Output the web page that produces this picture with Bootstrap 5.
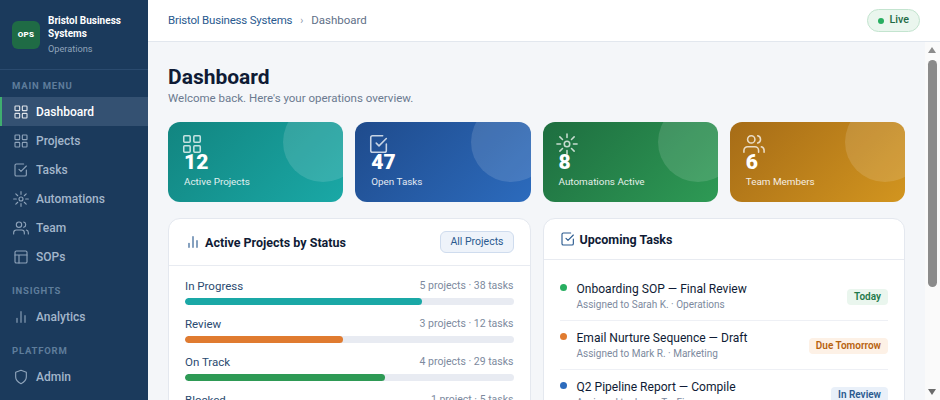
<!DOCTYPE html>
<html lang="en">
<head>
  <meta charset="UTF-8" />
  <meta name="viewport" content="width=device-width, initial-scale=1" />
  <title>Dashboard - Bristol Business Systems</title>
  <link href="https://cdn.jsdelivr.net/npm/bootstrap@5.3.3/dist/css/bootstrap.min.css" rel="stylesheet" />
  <style>
    html, body { height: 100%; overflow: hidden; }
    body { background-color: #f4f6f9; font-family: Roboto, "Noto Sans", sans-serif; font-size: 12px; color: #0f1b35; }
    svg.ico { fill: none; stroke: currentColor; stroke-width: 1.7; stroke-linecap: round; stroke-linejoin: round; flex-shrink: 0; }
    .shell { height: 400px; }
    .side-panel { width: 148px; background-color: #1b3a5c; color: #fff; flex-shrink: 0; height: 400px; overflow: hidden; }
    .brand-box { height: 70px; padding: 0 12px; border-bottom: 1px solid #2a4a6e; gap: 8px; flex-shrink: 0; }
    .brand-logo { width: 28px; height: 28px; border-radius: 6px; background-color: #1f6b45; font-size: 8px; font-weight: 900; letter-spacing: .3px; flex-shrink: 0; }
    .brand-name { font-size: 10px; font-weight: 700; line-height: 13px; }
    .brand-sub { font-size: 9.2px; line-height: 13px; margin-top: 2px; color: #8fa3ba; }
    .menu-label { font-size: 9.5px; font-weight: 700; letter-spacing: .8px; color: #5f7d9b; text-transform: uppercase; padding: 0 12px; line-height: 13px; margin: 13px 0 5px; flex-shrink: 0; }
    .menu-label.first-label { margin-top: 9px; }
    .menu-link { height: 29px; padding-left: 11px; gap: 7px; font-size: 12px; font-weight: 500; color: #a3b6cb; text-decoration: none; border-left: 2px solid transparent; flex-shrink: 0; }
    .menu-link svg { opacity: .85; }
    .menu-link.active { background-color: #345172; color: #fff; border-left-color: #3fae6f; }
    .top-strip { height: 42px; background-color: #fff; border-bottom: 1px solid #e2e7ee; padding: 0 20px; flex-shrink: 0; }
    .crumb-trail { font-size: 11.5px; color: #2a5a8f; letter-spacing: -.2px; }
    .crumb-sep { color: #8a97a8; margin: 0 8px; font-size: 10px; }
    .crumb-now { color: #5f7088; letter-spacing: 0; }
    .live-pill { height: 23px; padding: 0 10px; border-radius: 12px; background-color: #eaf6ee; border: 1px solid #c3e4cf; color: #1f6b45; font-size: 10.75px; font-weight: 500; gap: 5px; }
    .live-dot { width: 6px; height: 6px; border-radius: 50%; background-color: #27ae60; }
    .body-row { height: 358px; }
    .main-scroll { height: 358px; overflow: hidden; padding: 22px 20px 0; min-width: 0; }
    .scroll-rail { width: 15px; flex-shrink: 0; background-color: #fafafa; padding: 5px 3px; }
    .rail-up { width: 0; height: 0; border-left: 4.5px solid transparent; border-right: 4.5px solid transparent; border-bottom: 6px solid #8b8b8b; }
    .rail-down { width: 0; height: 0; border-left: 4.5px solid transparent; border-right: 4.5px solid transparent; border-top: 6px solid #6b6b6b; margin-top: auto; }
    .rail-thumb { width: 9px; height: 227px; border-radius: 5px; background-color: #8b8b8b; margin-top: 7px; }
    .page-title { font-size: 21px; font-weight: 700; line-height: 26px; margin: 0; color: #0f1b35; }
    .page-sub { font-size: 11.5px; color: #6b7a90; line-height: 16px; margin-bottom: 16px; }
    .stat-grid { display: grid; grid-template-columns: repeat(4, 1fr); gap: 12px; margin-bottom: 16px; }
    .stat-tile { position: relative; height: 80px; border-radius: 12px; overflow: hidden; color: #fff; padding: 11px 16px 0; }
    .stat-circle { position: absolute; width: 80px; height: 80px; border-radius: 50%; background-color: rgba(255,255,255,.13); top: -20px; right: -20px; }
    .stat-icon { display: block; margin-left: -3px; opacity: .75; }
    .stat-num { font-size: 21px; font-weight: 900; line-height: 20px; margin-top: -3px; }
    .stat-cap { font-size: 9.9px; line-height: 14px; margin-top: 3px; opacity: .88; }
    .tile-teal { background: linear-gradient(135deg, #128580, #1aa8a6); }
    .tile-blue { background: linear-gradient(135deg, #1f4b8c, #2c6bbd); }
    .tile-green { background: linear-gradient(135deg, #1e6e40, #2e9a55); }
    .tile-amber { background: linear-gradient(135deg, #a66c17, #d2951f); }
    .panel-grid { display: grid; grid-template-columns: 1fr 1fr; gap: 12px; }
    .panel-box { background-color: #fff; border: 1px solid #e4e8ef; border-radius: 12px; }
    .panel-head { border-bottom: 1px solid #e8ebf1; padding: 0 16px; gap: 4px; }
    .panel-title { font-size: 12.5px; font-weight: 700; color: #0f1b35; padding-top: 3px; }
    .head-tall { height: 47px; }
    .head-short { height: 41px; }
    .head-icon { color: #2a5a8f; }
    .ghost-btn { font-size: 10.5px; font-weight: 400; color: #2a5a8f; background-color: #eef3fa; border: 1px solid #cfdcee; border-radius: 6px; padding: 0 9px; height: 22px; line-height: 20px; }
    .bar-list { padding: 12px 16px 16px; }
    .bar-item { margin-bottom: 11px; }
    .bar-name { font-size: 11.5px; color: #2a4a70; font-weight: 400; line-height: 16px; }
    .bar-meta { font-size: 10.5px; color: #7d8a9e; line-height: 16px; }
    .bar-track { height: 7px; border-radius: 4px; background-color: #e8ebf2; margin-top: 4px; overflow: hidden; }
    .bar-fill { height: 7px; border-radius: 4px; }
    .task-list { padding: 12px 16px 7px; }
    .task-row { height: 49px; border-bottom: 1px solid #eef0f5; gap: 10px; padding: 9px 0 8px; }
    .task-dot { width: 7px; height: 7px; border-radius: 50%; margin-top: 3px; flex-shrink: 0; }
    .task-name { font-size: 12.05px; font-weight: 400; color: #0f1b35; line-height: 16px; }
    .task-sub { font-size: 10px; color: #7d8a9e; line-height: 15px; }
    .tag-chip { font-size: 10px; font-weight: 600; border-radius: 4px; padding: 0 7px; height: 16px; line-height: 16px; align-self: center; }
    .tag-green { background-color: #eaf6ee; color: #1f7a4a; }
    .tag-orange { background-color: #fdf1e6; color: #b8620e; }
    .tag-blue { background-color: #e9f0f9; color: #2a5a8f; }
  </style>
</head>
<body>
<div class="shell d-flex">
  <aside class="side-panel d-flex flex-column">
    <div class="brand-box d-flex align-items-center">
      <div class="brand-logo d-flex align-items-center justify-content-center">OPS</div>
      <div>
        <div class="brand-name">Bristol Business Systems</div>
        <div class="brand-sub">Operations</div>
      </div>
    </div>
    <div class="menu-label first-label">Main Menu</div>
    <a class="menu-link active d-flex align-items-center" href="#">
      <svg class="ico" width="16" height="16" viewBox="0 0 24 24"><rect x="3" y="3" width="7" height="7" rx="1"/><rect x="14" y="3" width="7" height="7" rx="1"/><rect x="3" y="14" width="7" height="7" rx="1"/><rect x="14" y="14" width="7" height="7" rx="1"/></svg>Dashboard</a>
    <a class="menu-link d-flex align-items-center" href="#">
      <svg class="ico" width="16" height="16" viewBox="0 0 24 24"><rect x="3" y="3" width="7" height="7" rx="1"/><rect x="14" y="3" width="7" height="7" rx="1"/><rect x="3" y="14" width="7" height="7" rx="1"/><rect x="14" y="14" width="7" height="7" rx="1"/></svg>Projects</a>
    <a class="menu-link d-flex align-items-center" href="#">
      <svg class="ico" width="16" height="16" viewBox="0 0 24 24"><path d="M9 11l3 3 8-8"/><path d="M20 12v7a2 2 0 0 1-2 2H5a2 2 0 0 1-2-2V5a2 2 0 0 1 2-2h11"/></svg>Tasks</a>
    <a class="menu-link d-flex align-items-center" href="#">
      <svg class="ico" width="16" height="16" viewBox="0 0 24 24"><circle cx="12" cy="12" r="3"/><path d="M12 1v4M12 19v4M4.2 4.2l2.9 2.9M16.9 16.9l2.9 2.9M1 12h4M19 12h4M4.2 19.8l2.9-2.9M16.9 7.1l2.9-2.9"/></svg>Automations</a>
    <a class="menu-link d-flex align-items-center" href="#">
      <svg class="ico" width="16" height="16" viewBox="0 0 24 24"><path d="M17 21v-2a4 4 0 0 0-4-4H5a4 4 0 0 0-4 4v2"/><circle cx="9" cy="7" r="4"/><path d="M23 21v-2a4 4 0 0 0-3-3.9"/><path d="M16 3.1a4 4 0 0 1 0 7.8"/></svg>Team</a>
    <a class="menu-link d-flex align-items-center" href="#">
      <svg class="ico" width="16" height="16" viewBox="0 0 24 24"><rect x="3" y="3" width="18" height="18" rx="2"/><path d="M3 9h18M9 21V9"/></svg>SOPs</a>
    <div class="menu-label">Insights</div>
    <a class="menu-link d-flex align-items-center" href="#">
      <svg class="ico" width="16" height="16" viewBox="0 0 24 24"><path d="M18 20V10M12 20V4M6 20v-6"/></svg>Analytics</a>
    <div class="menu-label">Platform</div>
    <a class="menu-link d-flex align-items-center" href="#">
      <svg class="ico" width="16" height="16" viewBox="0 0 24 24"><path d="M12 22s8-4 8-10V5l-8-3-8 3v7c0 6 8 10 8 10z"/></svg>Admin</a>
  </aside>

  <div class="flex-grow-1 d-flex flex-column" style="min-width:0">
    <header class="top-strip d-flex align-items-center justify-content-between">
      <div class="crumb-trail">Bristol Business Systems<span class="crumb-sep">›</span><span class="crumb-now">Dashboard</span></div>
      <div class="live-pill d-flex align-items-center"><span class="live-dot"></span>Live</div>
    </header>
    <div class="body-row d-flex">
      <main class="main-scroll flex-grow-1">
        <h1 class="page-title">Dashboard</h1>
        <div class="page-sub">Welcome back. Here's your operations overview.</div>

        <div class="stat-grid">
          <div class="stat-tile tile-teal">
            <span class="stat-circle"></span>
            <svg class="ico stat-icon" width="22" height="22" viewBox="0 0 24 24"><rect x="3" y="3" width="7" height="7" rx="1"/><rect x="14" y="3" width="7" height="7" rx="1"/><rect x="3" y="14" width="7" height="7" rx="1"/><rect x="14" y="14" width="7" height="7" rx="1"/></svg>
            <div class="stat-num">12</div>
            <div class="stat-cap">Active Projects</div>
          </div>
          <div class="stat-tile tile-blue">
            <span class="stat-circle"></span>
            <svg class="ico stat-icon" width="22" height="22" viewBox="0 0 24 24"><path d="M9 11l3 3 8-8"/><path d="M20 12v7a2 2 0 0 1-2 2H5a2 2 0 0 1-2-2V5a2 2 0 0 1 2-2h11"/></svg>
            <div class="stat-num">47</div>
            <div class="stat-cap">Open Tasks</div>
          </div>
          <div class="stat-tile tile-green">
            <span class="stat-circle"></span>
            <svg class="ico stat-icon" width="22" height="22" viewBox="0 0 24 24"><circle cx="12" cy="12" r="3"/><path d="M12 1v4M12 19v4M4.2 4.2l2.9 2.9M16.9 16.9l2.9 2.9M1 12h4M19 12h4M4.2 19.8l2.9-2.9M16.9 7.1l2.9-2.9"/></svg>
            <div class="stat-num">8</div>
            <div class="stat-cap">Automations Active</div>
          </div>
          <div class="stat-tile tile-amber">
            <span class="stat-circle"></span>
            <svg class="ico stat-icon" width="22" height="22" viewBox="0 0 24 24"><path d="M17 21v-2a4 4 0 0 0-4-4H5a4 4 0 0 0-4 4v2"/><circle cx="9" cy="7" r="4"/><path d="M23 21v-2a4 4 0 0 0-3-3.9"/><path d="M16 3.1a4 4 0 0 1 0 7.8"/></svg>
            <div class="stat-num">6</div>
            <div class="stat-cap">Team Members</div>
          </div>
        </div>

        <div class="panel-grid">
          <section class="panel-box">
            <div class="panel-head head-tall d-flex align-items-center">
              <svg class="ico head-icon" width="16" height="16" viewBox="0 0 24 24"><path d="M18 20V10M12 20V4M6 20v-6"/></svg>
              <span class="panel-title flex-grow-1">Active Projects by Status</span>
              <span class="ghost-btn">All Projects</span>
            </div>
            <div class="bar-list">
              <div class="bar-item">
                <div class="d-flex justify-content-between"><span class="bar-name">In Progress</span><span class="bar-meta">5 projects · 38 tasks</span></div>
                <div class="bar-track"><div class="bar-fill" style="width:72%;background-color:#1aa8a6"></div></div>
              </div>
              <div class="bar-item">
                <div class="d-flex justify-content-between"><span class="bar-name">Review</span><span class="bar-meta">3 projects · 12 tasks</span></div>
                <div class="bar-track"><div class="bar-fill" style="width:48%;background-color:#e07b30"></div></div>
              </div>
              <div class="bar-item">
                <div class="d-flex justify-content-between"><span class="bar-name">On Track</span><span class="bar-meta">4 projects · 29 tasks</span></div>
                <div class="bar-track"><div class="bar-fill" style="width:61%;background-color:#2e9a55"></div></div>
              </div>
              <div class="bar-item">
                <div class="d-flex justify-content-between"><span class="bar-name">Blocked</span><span class="bar-meta">1 project · 5 tasks</span></div>
                <div class="bar-track"><div class="bar-fill" style="width:14%;background-color:#d64545"></div></div>
              </div>
            </div>
          </section>
          <section class="panel-box">
            <div class="panel-head head-short d-flex align-items-center">
              <svg class="ico head-icon" width="16" height="16" viewBox="0 0 24 24"><path d="M9 11l3 3 8-8"/><path d="M20 12v7a2 2 0 0 1-2 2H5a2 2 0 0 1-2-2V5a2 2 0 0 1 2-2h11"/></svg>
              <span class="panel-title">Upcoming Tasks</span>
            </div>
            <div class="task-list">
              <div class="task-row d-flex">
                <span class="task-dot" style="background-color:#27ae60"></span>
                <div class="flex-grow-1"><div class="task-name">Onboarding SOP — Final Review</div><div class="task-sub">Assigned to Sarah K. · Operations</div></div>
                <span class="tag-chip tag-green">Today</span>
              </div>
              <div class="task-row d-flex">
                <span class="task-dot" style="background-color:#e07b30"></span>
                <div class="flex-grow-1"><div class="task-name">Email Nurture Sequence — Draft</div><div class="task-sub">Assigned to Mark R. · Marketing</div></div>
                <span class="tag-chip tag-orange">Due Tomorrow</span>
              </div>
              <div class="task-row d-flex">
                <span class="task-dot" style="background-color:#2c6bbd"></span>
                <div class="flex-grow-1"><div class="task-name">Q2 Pipeline Report — Compile</div><div class="task-sub">Assigned to Jason T. · Finance</div></div>
                <span class="tag-chip tag-blue">In Review</span>
              </div>
            </div>
          </section>
        </div>
      </main>
      <div class="scroll-rail d-flex flex-column">
        <span class="rail-up"></span>
        <span class="rail-thumb"></span>
        <span class="rail-down"></span>
      </div>
    </div>
  </div>
</div>
<script src="https://cdn.jsdelivr.net/npm/bootstrap@5.3.3/dist/js/bootstrap.bundle.min.js"></script>
</body>
</html>
